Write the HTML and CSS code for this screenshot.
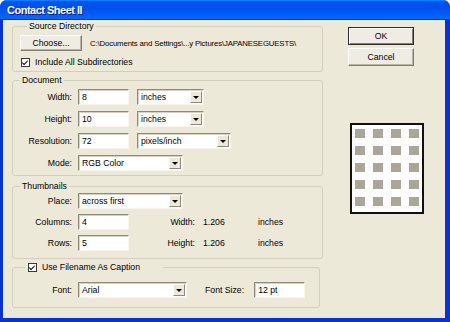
FILE: index.html
```html
<!DOCTYPE html>
<html>
<head>
<meta charset="utf-8">
<title>Contact Sheet II</title>
<link rel="stylesheet" href="styles.css">
</head>
<body>
<div class="window">
  <div class="titlebar"><span class="title">Contact Sheet II</span></div>
  <div class="client">
    <div class="main">
      <fieldset class="group g-source">
        <legend class="legend">Source Directory</legend>
        <div class="src-row">
          <button class="btn btn-choose">Choose...</button>
          <span class="path">C:\Documents and Settings\...y Pictures\JAPANESEGUESTS\</span>
        </div>
        <div class="check-row">
          <span class="checkbox"><svg viewBox="0 0 9 9" width="9" height="9"><path d="M1.5 4 L3.5 6 L7.5 2 L7.5 3.5 L3.5 7.5 L1.5 5.5 Z" fill="#000"/></svg></span>
          <span class="check-label">Include All Subdirectories</span>
        </div>
      </fieldset>

      <fieldset class="group g-doc">
        <legend class="legend">Document</legend>
        <div class="row">
          <span class="lbl">Width:</span>
          <span class="field">8</span>
          <span class="select sel-unit"><span class="sel-text">inches</span><span class="sel-btn"><i class="tri"></i></span></span>
        </div>
        <div class="row">
          <span class="lbl">Height:</span>
          <span class="field">10</span>
          <span class="select sel-unit"><span class="sel-text">inches</span><span class="sel-btn"><i class="tri"></i></span></span>
        </div>
        <div class="row">
          <span class="lbl">Resolution:</span>
          <span class="field">72</span>
          <span class="select sel-res"><span class="sel-text">pixels/inch</span><span class="sel-btn"><i class="tri"></i></span></span>
        </div>
        <div class="row">
          <span class="lbl">Mode:</span>
          <span class="select sel-wide"><span class="sel-text">RGB Color</span><span class="sel-btn"><i class="tri"></i></span></span>
        </div>
      </fieldset>

      <fieldset class="group g-thumb">
        <legend class="legend">Thumbnails</legend>
        <div class="row">
          <span class="lbl">Place:</span>
          <span class="select sel-wide"><span class="sel-text">across first</span><span class="sel-btn"><i class="tri"></i></span></span>
        </div>
        <div class="row">
          <span class="lbl">Columns:</span>
          <span class="field">4</span>
          <span class="lbl2">Width:</span>
          <span class="val">1.206</span>
          <span class="unit">inches</span>
        </div>
        <div class="row">
          <span class="lbl">Rows:</span>
          <span class="field">5</span>
          <span class="lbl2">Height:</span>
          <span class="val">1.206</span>
          <span class="unit">inches</span>
        </div>
      </fieldset>

      <fieldset class="group g-caption">
        <legend class="legend legend-check">
          <span class="legend-inner">
            <span class="checkbox"><svg viewBox="0 0 9 9" width="9" height="9"><path d="M1.5 4 L3.5 6 L7.5 2 L7.5 3.5 L3.5 7.5 L1.5 5.5 Z" fill="#000"/></svg></span>
            <span class="check-label">Use Filename As Caption</span>
          </span>
        </legend>
        <div class="row">
          <span class="lbl">Font:</span>
          <span class="select sel-font"><span class="sel-text">Arial</span><span class="sel-btn"><i class="tri"></i></span></span>
          <span class="lbl3">Font Size:</span>
          <span class="field field-size">12 pt</span>
        </div>
      </fieldset>
    </div>

    <div class="side">
      <button class="btn btn-ok">OK</button>
      <button class="btn btn-cancel">Cancel</button>
      <div class="preview">
        <span class="cell"></span><span class="cell"></span><span class="cell"></span><span class="cell"></span>
        <span class="cell"></span><span class="cell"></span><span class="cell"></span><span class="cell"></span>
        <span class="cell"></span><span class="cell"></span><span class="cell"></span><span class="cell"></span>
        <span class="cell"></span><span class="cell"></span><span class="cell"></span><span class="cell"></span>
        <span class="cell"></span><span class="cell"></span><span class="cell"></span><span class="cell"></span>
      </div>
    </div>
  </div>
</div>
</body>
</html>
```

FILE: styles.css
```css
* { box-sizing: border-box; }

html, body {
  margin: 0;
  padding: 0;
}

body {
  width: 450px;
  height: 322px;
  overflow: hidden;
  background: #ffffff;
  font-family: "Liberation Sans", Arial, sans-serif;
  font-size: 8.7px;
  color: #000;
}

.window {
  width: 450px;
  height: 322px;
  display: flex;
  flex-direction: column;
  border-radius: 7px 7px 0 0;
  overflow: hidden;
  background: #0831d9;
}

.titlebar {
  height: 20px;
  flex: none;
  display: flex;
  align-items: center;
  padding-left: 7px;
  background: linear-gradient(180deg, #0997ff, #0053ee 8%, #0050ee 40%, #0066ff 88%, #0066ff 93%, #005bff 95%, #003dd7 96%, #003dd7);
}

.title {
  color: #fff;
  font-weight: bold;
  font-size: 11px;
  letter-spacing: -0.5px;
  text-shadow: 1px 1px 0 #0f1089;
}

.client {
  flex: 1;
  display: flex;
  background: #ece9d8;
  border-style: solid;
  border-color: #0831d9;
  border-width: 0 5px 4px 3px;
  padding-left: 9px;
}

.main {
  width: 311px;
  flex: none;
  display: flex;
  flex-direction: column;
}

.group {
  margin: 0;
  padding: 0;
  min-width: 0;
  border: 1px solid #d0d0bf;
  border-radius: 3px;
}

.legend {
  padding: 0 2px;
  margin-left: 7px;
  line-height: 12px;
}

.g-source {
  height: 52px;
  padding: 3px 0 0 7px;
}

.src-row {
  display: flex;
  align-items: center;
}

.path {
  margin-left: 8px;
  white-space: nowrap;
  font-size: 7.8px;
  letter-spacing: -0.15px;
}

.btn {
  font-family: inherit;
  font-size: inherit;
  color: #000;
  padding: 0;
  margin: 0;
  background: #efede3;
  border: 1px solid;
  border-color: #ffffff #807d70 #807d70 #ffffff;
  box-shadow: inset -1px -1px 0 #b8b5a6;
}

.btn-choose {
  width: 62px;
  height: 16px;
  flex: none;
}

.check-row {
  display: flex;
  align-items: center;
  margin-top: 5px;
  padding-left: 1px;
  height: 12px;
}

.checkbox {
  width: 9px;
  height: 9px;
  flex: none;
  display: inline-flex;
  background: #fff;
  border: 1px solid #3a3a3a;
  overflow: hidden;
}

.checkbox svg {
  display: block;
  margin: -1px 0 0 -1px;
}

.check-label {
  margin-left: 5px;
  white-space: nowrap;
}

.g-doc {
  margin-top: 2px;
  height: 102px;
  padding: 3px 0 0 0;
}

.g-thumb {
  margin-top: 4px;
  height: 79px;
  padding: 1px 0 0 0;
}

.g-caption {
  margin-top: 2px;
  width: 308px;
  height: 47px;
  padding: 9px 0 0 0;
}

.legend-check {
  margin-left: 12px;
  padding: 0 23px 0 3px;
}

.legend-inner {
  display: flex;
  align-items: center;
  height: 12px;
}

.row {
  display: flex;
  align-items: center;
  height: 16px;
}

.row + .row {
  margin-top: 6px;
}

.g-thumb .row + .row {
  margin-top: 5px;
}

.lbl {
  width: 59px;
  flex: none;
  text-align: right;
  white-space: nowrap;
}

.field {
  margin-left: 6px;
  width: 51px;
  height: 16px;
  flex: none;
  background: #fff;
  border: 1px solid;
  border-color: #8d8a7c #f6f5ef #f6f5ef #8d8a7c;
  box-shadow: inset 1px 1px 0 #d6d3c4;
  padding-left: 3px;
  line-height: 14px;
  white-space: nowrap;
}

.select {
  height: 16px;
  flex: none;
  display: flex;
  background: #fff;
  border: 1px solid;
  border-color: #8d8a7c #f6f5ef #f6f5ef #8d8a7c;
  box-shadow: inset 1px 1px 0 #d6d3c4;
}

.sel-text {
  flex: 1;
  padding-left: 3px;
  line-height: 14px;
  white-space: nowrap;
}

.sel-btn {
  width: 12px;
  margin: 1px;
  flex: none;
  display: flex;
  align-items: center;
  justify-content: center;
  background: #ece9d8;
  border: 1px solid;
  border-color: #ffffff #8d8a7c #8d8a7c #ffffff;
}

.tri {
  display: block;
  width: 0;
  height: 0;
  border-left: 3px solid transparent;
  border-right: 3px solid transparent;
  border-top: 3px solid #000;
}

.sel-unit {
  margin-left: 8px;
  width: 67px;
}

.sel-res {
  margin-left: 8px;
  width: 94px;
}

.sel-wide {
  margin-left: 6px;
  width: 105px;
}

.sel-font {
  margin-left: 6px;
  width: 109px;
}

.lbl2 {
  margin-left: 6px;
  width: 60px;
  flex: none;
  text-align: right;
}

.val {
  margin-left: 8px;
  width: 55px;
  flex: none;
}

.unit {
  flex: none;
}

.lbl3 {
  margin-left: 18px;
  flex: none;
  white-space: nowrap;
}

.field-size {
  margin-left: 10px;
}

.side {
  margin-left: 25px;
  width: 66px;
  flex: none;
  display: flex;
  flex-direction: column;
  padding-top: 7px;
}

.btn-ok {
  height: 18px;
  border: 1px solid #2d2d2d;
  box-shadow: inset 1px 1px 0 #ffffff, inset -1px -1px 0 #807d70;
}

.btn-cancel {
  height: 18px;
  margin-top: 3px;
}

.preview {
  margin-top: 57px;
  margin-left: 2px;
  width: 74px;
  height: 91px;
  flex: none;
  background: #fff;
  border: 2px solid #111;
  padding: 4px 3px;
  display: grid;
  grid-template-columns: repeat(4, 10px);
  grid-template-rows: repeat(5, 9px);
  column-gap: 8px;
  row-gap: 8px;
  align-content: start;
}

.cell {
  background: #aaa797;
}
```
